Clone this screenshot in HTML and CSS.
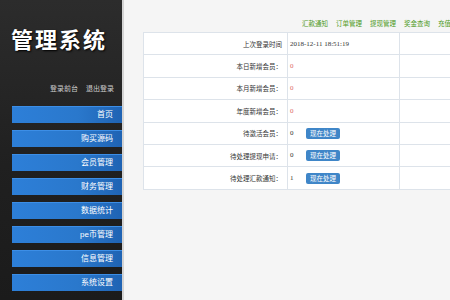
FILE: index.html
```html
<!DOCTYPE html>
<html lang="zh-CN">
<head>
    <meta charset="UTF-8">
    <meta name="viewport" content="width=device-width, initial-scale=1.0">
    <title>管理系统</title>
    <link rel="stylesheet" href="styles.css">
</head>
<body>
    <div class="page">
        <div class="sidebar">
            <h1 class="logo">管理系统</h1>
            <div class="user-links">
                <a href="#">登录前台</a>
                <a href="#">退出登录</a>
            </div>
            <ul class="menu">
                <li><a href="#">首页</a></li>
                <li><a href="#">购买源码</a></li>
                <li><a href="#">会员管理</a></li>
                <li><a href="#">财务管理</a></li>
                <li><a href="#">数据统计</a></li>
                <li><a href="#">pe币管理</a></li>
                <li><a href="#">信息管理</a></li>
                <li><a href="#">系统设置</a></li>
            </ul>
        </div>
        <div class="main">
            <div class="topnav">
                <a href="#">汇款通知</a>
                <a href="#">订单管理</a>
                <a href="#">提现管理</a>
                <a href="#">奖金查询</a>
                <a href="#">充值</a>
            </div>
            <table class="info">
                <tr>
                    <td class="label">上次登录时间</td>
                    <td class="value">2018-12-11 18:51:19</td>
                    <td class="empty"></td>
                </tr>
                <tr>
                    <td class="label">本日新增会员：</td>
                    <td class="value red">0</td>
                    <td class="empty"></td>
                </tr>
                <tr>
                    <td class="label">本月新增会员：</td>
                    <td class="value red">0</td>
                    <td class="empty"></td>
                </tr>
                <tr>
                    <td class="label">年度新增会员：</td>
                    <td class="value red">0</td>
                    <td class="empty"></td>
                </tr>
                <tr>
                    <td class="label">待激活会员：</td>
                    <td class="value"><span class="num">0</span><button class="btn">现在处理</button></td>
                    <td class="empty"></td>
                </tr>
                <tr>
                    <td class="label">待处理提现申请：</td>
                    <td class="value"><span class="num">0</span><button class="btn">现在处理</button></td>
                    <td class="empty"></td>
                </tr>
                <tr>
                    <td class="label">待处理汇款通知：</td>
                    <td class="value"><span class="num">1</span><button class="btn">现在处理</button></td>
                    <td class="empty"></td>
                </tr>
            </table>
        </div>
    </div>
</body>
</html>
```

FILE: styles.css
```css
html, body {
    margin: 0;
    padding: 0;
    height: 100%;
    overflow: hidden;
}
body {
    font-family: "Liberation Sans", "Noto Sans CJK SC", sans-serif;
    background-color: #f5f5f5;
    color: #333;
}
a {
    text-decoration: none;
}
.page {
    display: flex;
    height: 300px;
}
.sidebar {
    width: 124px;
    flex-shrink: 0;
    box-sizing: border-box;
    background: linear-gradient(180deg, #2c2c2c 0%, #202020 55%, #1b1b1b 100%);
    border-right: 2px solid #d4d4d4;
}
.logo {
    margin: 0;
    padding: 24px 0 0 11px;
    height: 56px;
    box-sizing: border-box;
    font-family: "Noto Sans CJK SC", sans-serif;
    font-size: 22px;
    font-weight: bold;
    letter-spacing: 2px;
    line-height: 28px;
    color: #fff;
    text-shadow: 1px 1px 2px #000;
}
.user-links {
    margin-top: 28px;
    text-align: right;
    padding-right: 8px;
    font-size: 7px;
    line-height: 10px;
}
.user-links a {
    color: #ccc;
    margin-left: 6px;
}
.menu {
    list-style: none;
    margin: 12px 0 0 12px;
    padding: 0;
}
.menu li {
    margin-bottom: 7px;
}
.menu a {
    display: block;
    height: 16px;
    line-height: 16px;
    padding-right: 9px;
    text-align: right;
    font-size: 8px;
    color: #fff;
    background: linear-gradient(90deg, #2d7fd8 0%, #2a78cc 60%, #1f63b3 100%);
    border-top: 1px solid #3c8ee6;
}
.main {
    flex: 1;
    padding-left: 19px;
    overflow: hidden;
}
.topnav {
    display: flex;
    gap: 8px;
    padding: 20px 0 0 159px;
    height: 12px;
    font-size: 6.5px;
    line-height: 8px;
    white-space: nowrap;
}
.topnav a {
    color: #4f9a1e;
}
.info {
    border-collapse: collapse;
    table-layout: fixed;
    background-color: #fff;
    width: 380px;
    font-size: 6.5px;
}
.info td {
    border: 1px solid #dde3ea;
    height: 21.4px;
    padding: 0;
}
.label {
    width: 138px;
    text-align: right;
    padding-right: 5px !important;
    color: #333;
}
.value {
    width: 109px;
    padding-left: 2px !important;
    font-family: "Liberation Serif", serif;
    font-size: 7px;
    color: #333;
    border-left-color: #c8d2de !important;
}
.empty {
    border-left-color: #c8d2de !important;
}
.red {
    color: #d66;
}
.num {
    display: inline-block;
    width: 16px;
}
.btn {
    font-family: "Liberation Sans", "Noto Sans CJK SC", sans-serif;
    font-size: 6.5px;
    height: 11px;
    line-height: 11px;
    padding: 0 4px;
    border: none;
    border-radius: 2px;
    background-color: #3f86c8;
    color: #fff;
    vertical-align: middle;
}
```
